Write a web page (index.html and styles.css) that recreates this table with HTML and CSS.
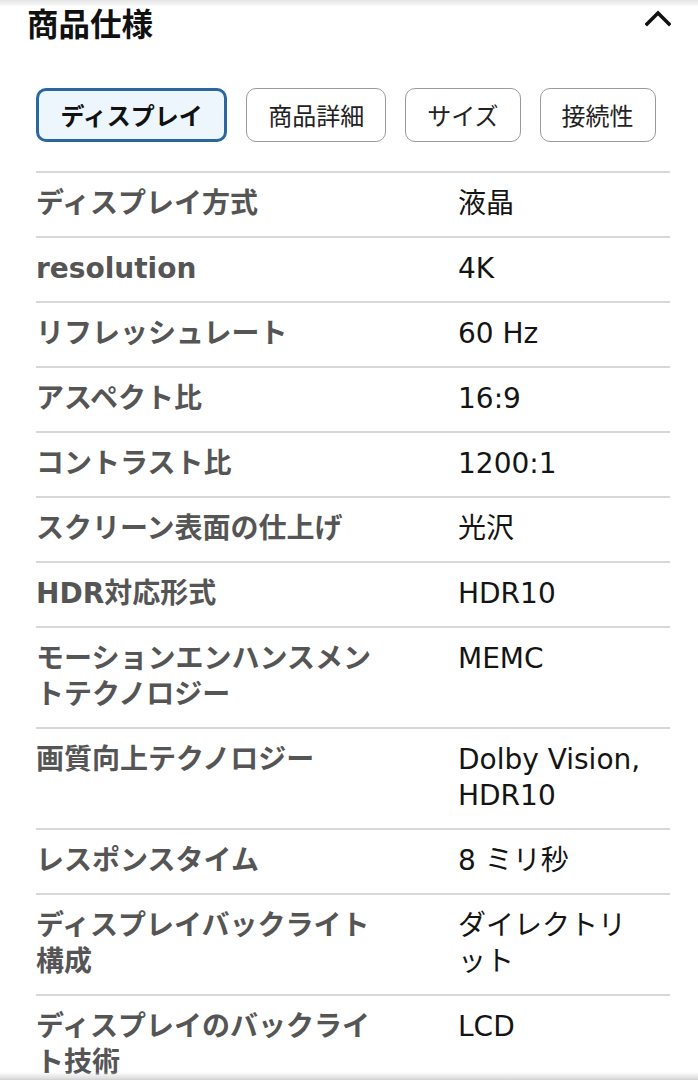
FILE: index.html
```html
<!DOCTYPE html>
<html lang="ja">
<head>
<meta charset="utf-8">
<title>商品仕様</title>
<link rel="stylesheet" href="styles.css">
</head>
<body>
<div class="top-shade"></div>
<section class="specs">
  <header class="specs-header">
    <h2 class="specs-title">商品仕様</h2>
    <svg class="chevron" width="26" height="18" viewBox="0 0 26 18" aria-hidden="true">
      <polyline points="2,15 13,4 24,15" fill="none" stroke="#111" stroke-width="3.6" stroke-linecap="square" stroke-linejoin="miter"/>
    </svg>
  </header>

  <nav class="tabs">
    <button class="tab tab-active">ディスプレイ</button>
    <button class="tab">商品詳細</button>
    <button class="tab">サイズ</button>
    <button class="tab">接続性</button>
  </nav>

  <div class="spec-table">
    <div class="spec-row"><div class="spec-label">ディスプレイ方式</div><div class="spec-value">液晶</div></div>
    <div class="spec-row"><div class="spec-label">resolution</div><div class="spec-value">4K</div></div>
    <div class="spec-row"><div class="spec-label">リフレッシュレート</div><div class="spec-value">60 Hz</div></div>
    <div class="spec-row"><div class="spec-label">アスペクト比</div><div class="spec-value">16:9</div></div>
    <div class="spec-row"><div class="spec-label">コントラスト比</div><div class="spec-value">1200:1</div></div>
    <div class="spec-row"><div class="spec-label">スクリーン表面の仕上げ</div><div class="spec-value">光沢</div></div>
    <div class="spec-row"><div class="spec-label">HDR対応形式</div><div class="spec-value">HDR10</div></div>
    <div class="spec-row"><div class="spec-label">モーションエンハンスメントテクノロジー</div><div class="spec-value">MEMC</div></div>
    <div class="spec-row"><div class="spec-label">画質向上テクノロジー</div><div class="spec-value">Dolby Vision, HDR10</div></div>
    <div class="spec-row"><div class="spec-label">レスポンスタイム</div><div class="spec-value">8 ミリ秒</div></div>
    <div class="spec-row"><div class="spec-label">ディスプレイバックライト構成</div><div class="spec-value">ダイレクトリット</div></div>
    <div class="spec-row"><div class="spec-label">ディスプレイのバックライト技術</div><div class="spec-value">LCD</div></div>
  </div>
</section>
<div class="bottom-shade"></div>
</body>
</html>
```

FILE: styles.css
```css
* { box-sizing: border-box; }

html, body {
  margin: 0;
  padding: 0;
  background: #fff;
}

body {
  font-family: "DejaVu Sans", "Noto Sans CJK JP", sans-serif;
  color: #111;
}

.top-shade {
  position: fixed;
  top: 0;
  left: 0;
  right: 0;
  height: 7px;
  background: linear-gradient(#e4e4e4, rgba(255,255,255,0));
  pointer-events: none;
}

.bottom-shade {
  position: fixed;
  bottom: 0;
  left: 0;
  right: 0;
  height: 8px;
  background: linear-gradient(rgba(255,255,255,0), #e2e2e2 70%, #d0d0d0);
  pointer-events: none;
}

.specs {
  padding: 0 28px 0 36px;
}

.specs-header {
  display: flex;
  align-items: center;
  justify-content: space-between;
  height: 44px;
  margin-left: -9px;
}

.specs-title {
  margin: 0;
  font-family: "Noto Sans CJK JP", sans-serif;
  font-size: 31.5px;
  font-weight: 700;
  line-height: 42px;
  color: #111;
}

.chevron {
  display: block;
  margin-top: -9px;
  margin-right: -1px;
}

.tabs {
  display: flex;
  gap: 19px;
  margin-top: 44px;
}

.tab {
  height: 54px;
  padding: 0 21px;
  border: 1.5px solid #9a9a9a;
  border-radius: 10px;
  background: #fff;
  font-family: "Noto Sans CJK JP", sans-serif;
  font-size: 24px;
  color: #222;
  line-height: 1;
}

.tab-active {
  padding: 0 21.5px;
  border: 3.5px solid #2a679e;
  background: #edf6fd;
  color: #111;
  font-weight: 700;
}

.spec-table {
  margin-top: 29px;
  border-top: 2px solid #d8d8d8;
}

.spec-row {
  display: grid;
  grid-template-columns: 350px 185px;
  column-gap: 72px;
  padding: 13px 0 14px;
  border-bottom: 2px solid #d8d8d8;
  font-size: 28px;
  line-height: 36px;
}

.spec-label {
  color: #555;
  font-weight: 700;
}

.spec-value {
  color: #141414;
  font-weight: 400;
}
```
